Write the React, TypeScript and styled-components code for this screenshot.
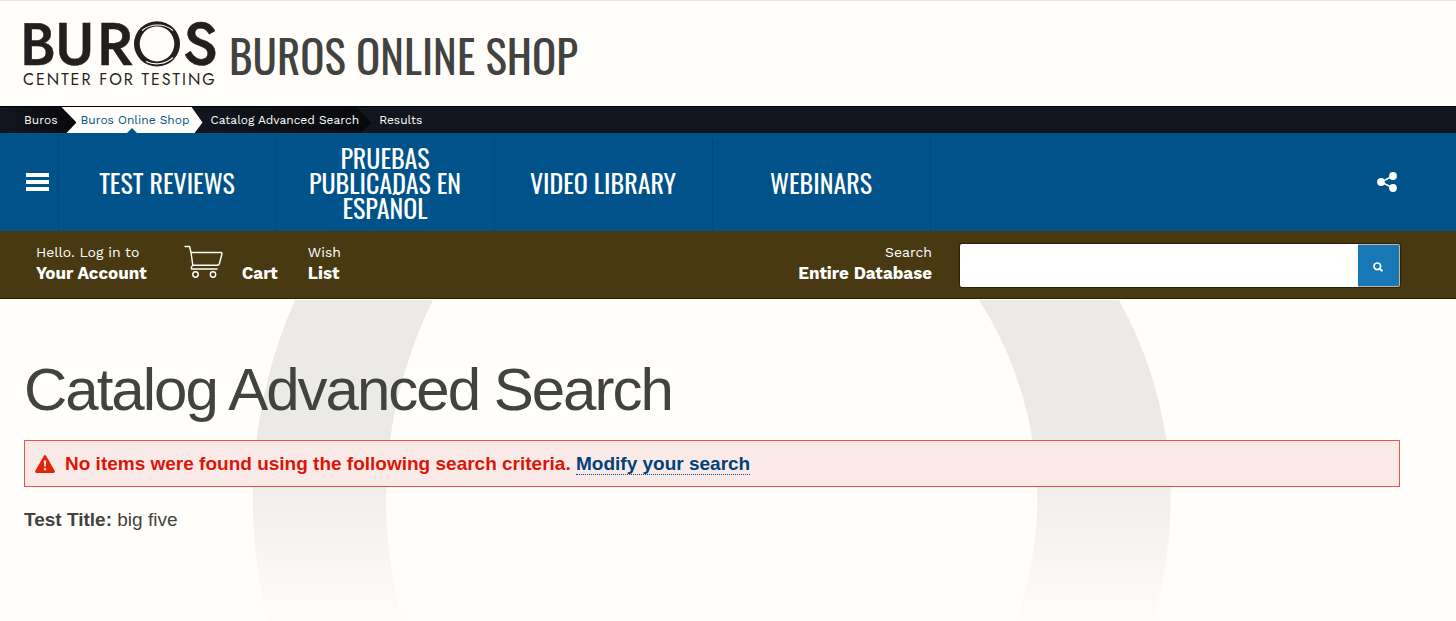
import React from "react";
import styled, { createGlobalStyle } from "styled-components";

const GlobalStyle = createGlobalStyle`
  *, *::before, *::after { box-sizing: border-box; }
  html, body { margin: 0; min-height: 100%; background: #fffefa; }
  body { color: #424240; font-family: "Liberation Sans", Arial, sans-serif; font-size: 20px; }
  a { color: inherit; text-decoration: none; }
  ul, ol { list-style: none; margin: 0; padding: 0; }
  button { font: inherit; cursor: pointer; }
`;

const condensed = `"Oswald", "Liberation Sans Narrow", "Liberation Sans", sans-serif`;
const work = `"Work Sans", "Inter", sans-serif`;
const geometric = `Jost, "Josefin Sans", Lato, sans-serif`;

const Page = styled.div`
  display: flex;
  flex-direction: column;
  min-height: 100vh;
  overflow: hidden;
`;

const Header = styled.header`
  display: flex;
  align-items: center;
  gap: 13px;
  height: 106px;
  padding: 0 56px 0 24px;
  border-top: 1px solid #e6e6e3;
`;

const LogoLink = styled.a`
  display: block;
  color: #231f20;
  svg { display: block; overflow: visible; }
`;

const SiteTitle = styled.a`
  padding-top: 2px;
  font-family: ${condensed};
  font-size: 45px;
  line-height: 56px;
  text-transform: uppercase;
  white-space: nowrap;
`;

const Crumbs = styled.ol`
  display: flex;
  height: 27px;
  background: #13161f;
  border-top: 1px solid #000;
  font-family: ${work};
  font-size: 12px;
  line-height: 26px;
  color: #fff;
`;

const Crumb = styled.li<{ $tone: "first" | "light" | "dark" | "plain"; $level: number }>`
  position: relative;
  z-index: ${(p) => p.$level};
  margin-left: ${(p) => (p.$tone === "first" ? "0" : "-16px")};
  padding: ${(p) =>
    ({
      first: "0 19px 0 24px",
      light: "0 13px 0 20px",
      dark: "0 12px 0 24px",
      plain: "0 12px 0 24px",
    })[p.$tone]};
  white-space: nowrap;
  background: ${(p) =>
    ({
      first: "linear-gradient(90deg, #13161f, #08090c)",
      light: "#fffefa",
      dark: "linear-gradient(90deg, #13161f, #08090c)",
      plain: "transparent",
    })[p.$tone]};
  color: ${(p) => (p.$tone === "light" ? "#00528a" : "#fff")};
  clip-path: ${(p) =>
    p.$tone === "light"
      ? "polygon(0 0, calc(100% - 11px) 0, 100% 60%, calc(100% - 8px) 100%, 0 100%)"
      : "polygon(0 0, calc(100% - 15px) 0, 100% 60%, calc(100% - 10px) 100%, 0 100%)"};
`;

const Notch = styled.span`
  position: absolute;
  left: calc(50% - 5px);
  bottom: 0;
  border: 5px solid transparent;
  border-top: 0;
  border-bottom-color: #00528a;
`;

const Nav = styled.nav`
  display: flex;
  min-height: 98px;
  padding-right: 56px;
  background: #00528a;
  color: #fff;
`;

const MenuButton = styled.button`
  display: flex;
  align-items: center;
  justify-content: flex-end;
  width: 59px;
  padding: 0 9px;
  border: 0;
  border-right: 1px solid #004a7d;
  background: none;
  color: inherit;
`;

const NavList = styled.ul`
  display: flex;
  flex: 1;
`;

const NavItem = styled.li`
  display: flex;
  flex: 0 1 218px;
  align-items: center;
  justify-content: center;
  padding: 0 25px 0 24px;
  border-right: 1px solid #004a7d;
  font-family: ${condensed};
  font-size: 26px;
  line-height: 25px;
  text-align: center;
  text-transform: uppercase;
`;

const ShareButton = styled.button`
  display: flex;
  align-items: center;
  padding: 0 3px;
  border: 0;
  background: none;
  color: inherit;
`;

const ShopBar = styled.section`
  display: flex;
  align-items: center;
  height: 68px;
  padding: 2px 56px 0 36px;
  background: #493913;
  border-bottom: 1px solid #2f2105;
  color: #fff;
  font-family: ${work};
  font-size: 14px;
  line-height: 21px;
`;

const BarLink = styled.a`
  display: block;
  padding-bottom: 5px;
  white-space: nowrap;
`;

const Strong = styled.strong`
  display: block;
  font-size: 17px;
  font-weight: 700;
`;

const CartLink = styled.a`
  display: flex;
  align-items: flex-end;
  gap: 19px;
  margin: 0 30px 0 37px;
  padding-bottom: 3px;
  svg { display: block; margin-bottom: 5px; }
`;

const SearchForm = styled.form`
  display: flex;
  flex: 1;
  align-items: center;
  justify-content: flex-end;
  gap: 28px;
`;

const SearchLabel = styled.label`
  padding-bottom: 5px;
  text-align: right;
  white-space: nowrap;
`;

const SearchGroup = styled.div`
  display: flex;
  flex: 0 1 440px;
  height: 43px;
  border-radius: 2px;
  box-shadow: 0 0 1px 1px #2f2105;
`;

const SearchInput = styled.input`
  flex: 1;
  min-width: 0;
  padding: 0 12px;
  border: 0;
  border-radius: 2px 0 0 2px;
  background: #fff;
  font: inherit;
`;

const SearchButton = styled.button`
  display: flex;
  align-items: center;
  justify-content: center;
  width: 42px;
  padding: 2px 2px 0 0;
  border: 1px solid #bfb6a6;
  border-left: 0;
  border-radius: 0 2px 2px 0;
  background: #1878b6;
  color: #fff;
`;

const Main = styled.main`
  position: relative;
  flex: 1;
  padding: 56px 56px 56px 24px;
`;

const Ring = styled.svg`
  position: absolute;
  top: 1px;
  left: 50%;
  margin-left: -475px;
`;

const Content = styled.div`
  position: relative;
`;

const Heading = styled.h1`
  margin: 0 0 16px;
  font-size: 60px;
  font-weight: 400;
  line-height: 69px;
  letter-spacing: -2px;
`;

const Alert = styled.div`
  display: flex;
  align-items: center;
  gap: 10px;
  min-height: 47px;
  padding: 0 10px;
  border: 1px solid #f0523f;
  background: #faeae7;
  color: #dd1507;
  font-size: 19px;
  font-weight: 700;
  line-height: 22px;
  p { margin: 0; }
`;

const ModifyLink = styled.a`
  color: #00417a;
  border-bottom: 1px dotted #00528a;
`;

const Criteria = styled.p`
  margin: 21px 0 0;
  font-size: 19px;
  line-height: 24px;
`;

const Logo = () => (
  <svg width="192" height="66" viewBox="0 0 192 66" fill="currentColor" role="img" aria-label="Buros Center for Testing">
    <g fontFamily={geometric} fontWeight="500" fontSize="60" stroke="currentColor" strokeWidth=".5">
      <text x="-4 31 73" y="44">BUR</text>
      <text x="159" y="44">S</text>
    </g>
    <path
      fillRule="evenodd"
      d="M133 .2a23 22.700 0 1 0 0 45.400a23 22.700 0 1 0 0-45.400ZM133 5.400a17.300 17.500 0 1 1 0 35a17.300 17.500 0 1 1 0-35Z"
    />
    <path
      d="M118 9.500A23 21 0 0 1 149 9.500M122 40.500A23 21 0 0 0 149 36.500"
      fill="none"
      stroke="#fffefa"
      strokeWidth="1.100"
    />
    <text x="-1" y="64" fontFamily={geometric} fontSize="16" letterSpacing="2">
      CENTER FOR TESTING
    </text>
  </svg>
);

const CartIcon = () => (
  <svg width="39" height="34" viewBox="0 0 39 34" fill="none" stroke="currentColor" strokeWidth="1.400" strokeLinecap="round" strokeLinejoin="round" aria-hidden="true">
    <path d="M1 1.500h4.500l1.500 6h30q1.200 0 .9 1.500l-2.500 9.500q-.5 1.700-2 1.700H8.800L7 7.500M7.500 24h25.500M8.800 20.200q-2 1.500-1.300 3.800" />
    <circle cx="11.500" cy="29.500" r="2.700" />
    <circle cx="29" cy="29.500" r="2.700" />
  </svg>
);

const BackgroundRing = () => (
  <Ring width="918" height="322" viewBox="253 300 918 322" aria-hidden="true">
    <defs>
      <linearGradient id="fade" gradientUnits="userSpaceOnUse" x1="0" y1="450" x2="0" y2="630">
        <stop offset="0" stopColor="#ebeae7" />
        <stop offset="1" stopColor="#fffefa" />
      </linearGradient>
    </defs>
    <g fill="url(#fade)">
      <path d="M295 300A497 497 0 0 0 268 622H403A449 449 0 0 1 433 300Z" />
      <path d="M979 300A368 368 0 0 1 1016 622H1152A411 411 0 0 0 1119 300Z" />
    </g>
  </Ring>
);

const sections = ["Test Reviews", "Pruebas Publicadas en Español", "Video Library", "Webinars"];

export default function App() {
  return (
    <>
      <GlobalStyle />
      <Page>
        <Header>
          <LogoLink href="#"><Logo /></LogoLink>
          <SiteTitle href="#">Buros Online Shop</SiteTitle>
        </Header>
        <Crumbs aria-label="Breadcrumb">
          <Crumb $tone="first" $level={4}><a href="#">Buros</a></Crumb>
          <Crumb $tone="light" $level={3}><a href="#">Buros Online Shop</a><Notch /></Crumb>
          <Crumb $tone="dark" $level={2}><a href="#">Catalog Advanced Search</a></Crumb>
          <Crumb $tone="plain" $level={1}>Results</Crumb>
        </Crumbs>
        <Nav aria-label="Main">
          <MenuButton type="button" aria-label="Menu">
            <svg width="23" height="18" viewBox="0 0 23 18" fill="currentColor" aria-hidden="true">
              <path d="M0 0h23v4H0zM0 7h23v4H0zM0 14h23v4H0z" />
            </svg>
          </MenuButton>
          <NavList>
            {sections.map((name) => (
              <NavItem key={name}><a href="#">{name}</a></NavItem>
            ))}
          </NavList>
          <ShareButton type="button" aria-label="Share">
            <svg width="20" height="20" viewBox="0 0 20 20" fill="currentColor" aria-hidden="true">
              <path d="M16 4L4 10l12 6" fill="none" stroke="currentColor" strokeWidth="1.500" />
              <circle cx="4" cy="10" r="3.900" />
              <circle cx="16" cy="4" r="3.900" />
              <circle cx="16" cy="16" r="3.900" />
            </svg>
          </ShareButton>
        </Nav>
        <ShopBar aria-label="Shop tools">
          <BarLink href="#">Hello. Log in to<Strong>Your Account</Strong></BarLink>
          <CartLink href="#"><CartIcon /><Strong>Cart</Strong></CartLink>
          <BarLink href="#">Wish<Strong>List</Strong></BarLink>
          <SearchForm onSubmit={(e) => e.preventDefault()}>
            <SearchLabel htmlFor="catalog-search">Search<Strong>Entire Database</Strong></SearchLabel>
            <SearchGroup>
              <SearchInput id="catalog-search" type="search" />
              <SearchButton type="submit" aria-label="Search">
                <svg width="10" height="10" viewBox="0 0 10 10" fill="none" stroke="currentColor" aria-hidden="true">
                  <circle cx="4.300" cy="4.300" r="3.300" strokeWidth="1.700" />
                  <path d="M6.500 6.500L9.500 9.300" strokeWidth="1.900" />
                </svg>
              </SearchButton>
            </SearchGroup>
          </SearchForm>
        </ShopBar>
        <Main>
          <BackgroundRing />
          <Content>
            <Heading>Catalog Advanced Search</Heading>
            <Alert role="alert">
              <svg width="20" height="18" viewBox="0 0 20 18" aria-hidden="true">
                <path d="M8.900.7Q10-.7 11.100.7L19.700 15.800Q20.400 17.700 18.500 18H1.500Q-.4 17.700.3 15.800Z" fill="#e3230b" />
                <path d="M8.800 5.500h2.400l-.4 6H9.200zM8.900 13h2.200v2.200H8.900z" fill="#faeae7" />
              </svg>
              <p>
                No items were found using the following search criteria. <ModifyLink href="#">Modify your search</ModifyLink>
              </p>
            </Alert>
            <Criteria><b>Test Title:</b> big five</Criteria>
          </Content>
        </Main>
      </Page>
    </>
  );
}
